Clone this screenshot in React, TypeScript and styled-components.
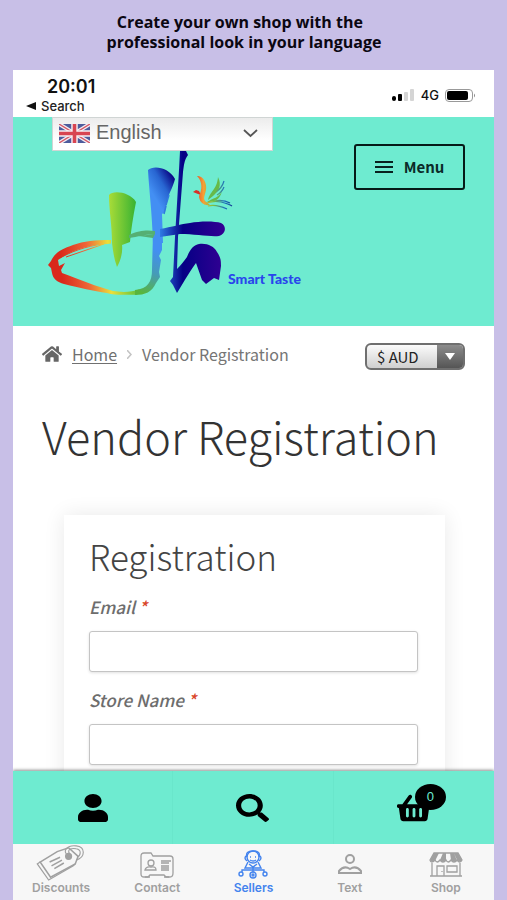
import React from 'react';
import styled, { createGlobalStyle } from 'styled-components';
import { FaHome, FaUser, FaSearch, FaShoppingBasket } from 'react-icons/fa';

const teal = '#6eebd0';
const sans = '"Noto Sans CJK SC", "Noto Sans", sans-serif';
const system = 'Inter, "Liberation Sans", sans-serif';

const GlobalStyle = createGlobalStyle`
  * { box-sizing: border-box; }
  body { margin: 0; background: #c8bfe7; font-family: ${sans}; color: #6d6d6d; }
  h1, h2, p { margin: 0; }
`;

const Page = styled.div`
  height: 100vh;
  display: flex;
  flex-direction: column;
  padding: 0 13px;
`;

const Caption = styled.p`
  padding: 12px 19px 18px 0;
  font: 700 16px/20px "Open Sans", sans-serif;
  text-align: center;
  white-space: pre;
  color: #0b0712;
`;

const Phone = styled.div`
  flex: 1;
  min-height: 0;
  display: flex;
  flex-direction: column;
  background: #fff;
`;

const StatusBar = styled.div`
  display: flex;
  justify-content: space-between;
  align-items: center;
  padding: 6px 18px 3px 13px;
  color: #111;
  font-family: ${system};
`;

const Time = styled.div`
  padding-left: 21px;
  font-size: 18px;
  line-height: 22px;
  font-weight: 600;
`;

const BackLink = styled.a`
  display: flex;
  align-items: center;
  gap: 5px;
  font-size: 13px;
  line-height: 16px;
  font-weight: 500;
  color: #222;
  text-decoration: none;
`;

const Signals = styled.div`
  display: flex;
  align-items: center;
  gap: 6px;
  font-size: 13px;
  font-weight: 500;
`;

const Header = styled.header`
  display: flex;
  justify-content: space-between;
  align-items: flex-start;
  min-height: 209px;
  padding: 0 29px 0 32px;
  background: ${teal};
`;

const Brand = styled.div`
  display: flex;
  flex-direction: column;
`;

const LanguageBox = styled.label`
  display: flex;
  align-items: center;
  width: 221px;
  height: 34px;
  margin-left: 7px;
  padding: 0 14px 2px 6px;
  border: 1px solid #d0d5d4;
  background: linear-gradient(#ececec, #fff 70%);
`;

const LanguageSelect = styled.select`
  flex: 1;
  min-width: 0;
  appearance: none;
  border: 0;
  padding: 0 0 2px 6px;
  background: transparent;
  font: 20px/24px "Liberation Sans", sans-serif;
  color: #666;
`;

const MenuButton = styled.button`
  display: flex;
  align-items: center;
  justify-content: center;
  gap: 11px;
  width: 111px;
  height: 46px;
  margin-top: 27px;
  border: 2px solid #061a18;
  border-radius: 3px;
  background: transparent;
  font: 700 15px/20px ${sans};
  color: #0b2b29;
`;

const Content = styled.main`
  flex: 1;
  min-height: 0;
  overflow: hidden;
  padding: 17px 29px 0;
`;

const TopRow = styled.div`
  display: flex;
  justify-content: space-between;
  align-items: flex-start;
`;

const Breadcrumb = styled.nav`
  display: flex;
  align-items: center;
  gap: 10px;
  font-size: 16px;
  line-height: 22px;
  color: #757575;

  a { color: #707070; text-underline-offset: 2px; }
`;

const CurrencyBox = styled.label`
  display: flex;
  width: 100px;
  height: 27px;
  border: 2px solid #6f6f6f;
  border-radius: 6px;
  overflow: hidden;
  background: linear-gradient(#fbfbfb, #cfcfcf);
`;

const CurrencySelect = styled.select`
  flex: 1;
  min-width: 0;
  appearance: none;
  border: 0;
  padding: 0 0 0 10px;
  background: transparent;
  font: 15px/22px ${sans};
  color: #222;
`;

const CurrencyArrow = styled.span`
  display: flex;
  align-items: center;
  justify-content: center;
  width: 26px;
  background: linear-gradient(#8c8c8c, #555);
`;

const Title = styled.h1`
  margin-top: 34px;
  font: 300 45px/64px ${sans};
  color: #333;
  white-space: nowrap;
`;

const Card = styled.form`
  margin: 47px 20px 0 22px;
  padding: 18px 27px 24px 25px;
  background: #fff;
  box-shadow: 0 0 20px rgba(0, 0, 0, 0.09);
`;

const CardTitle = styled.h2`
  font: 300 35px/46px ${sans};
  color: #444;
`;

const Field = styled.div`
  display: flex;
  flex-direction: column;
  gap: 11px;
  padding-top: 15px;
`;

const FieldLabel = styled.label`
  font-size: 17px;
  line-height: 26px;
  font-weight: 500;
  font-style: italic;
  color: #6d6d6d;
`;

const Required = styled.span`
  color: #d9482b;
`;

const TextInput = styled.input`
  width: 100%;
  height: 41px;
  padding: 0 10px;
  border: 1px solid #c4c4c4;
  border-radius: 3px;
  background: #fff;
  box-shadow: 0 1px 3px rgba(0, 0, 0, 0.12);
`;

const ActionBar = styled.nav`
  display: grid;
  grid-template-columns: repeat(3, 1fr);
  height: 73px;
  background: ${teal};
  box-shadow: 0 -1px 3px rgba(0, 0, 0, 0.45);
  clip-path: inset(-6px 0 0 0);
`;

const Action = styled.button`
  display: flex;
  align-items: center;
  justify-content: center;
  border: 0;
  border-right: 1px solid #69e6cb;
  padding: 0;
  background: transparent;
  color: #000;

  &:last-child { border-right: 0; }
`;

const PersonIcon = styled(FaUser)`
  width: 30px;
  height: 28px;
`;

const SearchIcon = styled(FaSearch)`
  width: 33px;
  height: 28px;
`;

const BasketWrap = styled.span`
  position: relative;
  display: flex;
`;

const Badge = styled.span`
  position: absolute;
  left: 18px;
  top: -7px;
  width: 31px;
  height: 26px;
  border-radius: 50%;
  background: #000;
  font-size: 13px;
  line-height: 26px;
  text-align: center;
  color: ${teal};
`;

const TabBar = styled.nav`
  display: grid;
  grid-template-columns: repeat(5, 1fr);
  height: 56px;
  background: #f7f7f7;
`;

const Tab = styled.a<{ $active?: boolean }>`
  display: flex;
  flex-direction: column;
  align-items: center;
  justify-content: flex-end;
  padding-bottom: 5px;
  font: 600 12px/14px ${system};
  text-decoration: none;
  color: ${(p) => (p.$active ? '#4484ee' : '#a0a0a0')};

  svg { fill: none; stroke: currentColor; }
`;

const Flag = () => (
  <svg width="31" height="19" viewBox="0 0 31 19" aria-hidden="true">
    <rect width="31" height="19" fill="#4d5c9c" />
    <path d="M0 0L31 19M31 0L0 19" stroke="#f3edf3" strokeWidth="4" />
    <path d="M0 0L31 19M31 0L0 19" stroke="#d65765" strokeWidth="1.4" />
    <path d="M15.500 0V19M0 9.500H31" stroke="#f7f0f3" strokeWidth="6.500" />
    <path d="M15.500 0V19M0 9.500H31" stroke="#d84552" strokeWidth="3.600" />
  </svg>
);

const Logo = () => (
  <svg width="265" height="150" viewBox="45 151 265 150" role="img" aria-label="Smart Taste">
    <defs>
      <linearGradient id="leaf" x1="0" x2="1">
        <stop offset="0" stopColor="#a9dc38" /><stop offset="1" stopColor="#38b232" />
      </linearGradient>
      <linearGradient id="stem" gradientUnits="userSpaceOnUse" x1="154" x2="177" y1="196" y2="182">
        <stop offset="0" stopColor="#438ff3" /><stop offset="0.500" stopColor="#2866d2" /><stop offset="1" stopColor="#070382" />
      </linearGradient>
      <linearGradient id="hook" gradientUnits="userSpaceOnUse" x1="48" x2="162" y1="270" y2="262">
        <stop offset="0.120" stopColor="#d9291b" /><stop offset="0.350" stopColor="#ef6638" /><stop offset="0.540" stopColor="#ecdf38" /><stop offset="0.720" stopColor="#7cc93c" /><stop offset="0.860" stopColor="#4fae5c" /><stop offset="1" stopColor="#439bd0" />
      </linearGradient>
      <linearGradient id="ink" gradientUnits="userSpaceOnUse" x1="160" x2="225" y1="0" y2="0">
        <stop offset="0" stopColor="#2f7be4" /><stop offset="0.350" stopColor="#050085" /><stop offset="1" stopColor="#330093" />
      </linearGradient>
      <linearGradient id="tail" gradientUnits="userSpaceOnUse" x1="194" x2="232" y1="0" y2="0">
        <stop offset="0" stopColor="#e5361f" /><stop offset="0.250" stopColor="#f6a035" /><stop offset="0.500" stopColor="#7ec43d" /><stop offset="0.800" stopColor="#1c6fc0" /><stop offset="1" stopColor="#123a94" />
      </linearGradient>
      <linearGradient id="turn" gradientUnits="userSpaceOnUse" x1="158" x2="140" y1="250" y2="292">
        <stop offset="0" stopColor="#438ff3" /><stop offset="0.500" stopColor="#459bb8" /><stop offset="1" stopColor="#58b53e" />
      </linearGradient>
    </defs>
    <path d="M111 240C95 240 84 241 73 245C62 249 55 252 51 261L48 265L51 268L52 273C53 279 57 282 64 284C80 288 93 291 107 293C117 296 128 294 137 295L140 289C130 293 120 292 113 291C98 287 78 279 62 273L61 270L65 263L59 266L58 260C70 251 88 245 111 243Z" fill="url(#hook)" />
    <path d="M60 258C76 249 92 245 111 243M62 255C76 248 90 243 110 241M66 257L104 244" fill="none" stroke="url(#hook)" strokeWidth="1" />
    <path d="M109 195C113 190 130 192 136 202C133 217 131 230 130 242L122 245C123 253 120 262 117 267C114 259 113 251 112 243C112 224 109 211 109 195Z" fill="url(#leaf)" />
    <path d="M153 233H162V250L159 256L161 260L159 272L160 277L156 283C152 292 145 295 135 295V290C148 289 152 281 152 270Z" fill="url(#turn)" />
    <path d="M148 170C153 165 169 167 175 179C173 187 170 191 168 198L165 212L162 214L163 243H153C152 211 149 190 148 170Z" fill="url(#stem)" />
    <path d="M169 195L166 205M166 206L164 214" stroke="#3178dd" strokeWidth="1.500" />
    <path d="M129 235C140 230 147 230 155 231V234C147 234 137 237 129 238ZM139 236L155 234L153 238Z" fill="#55af73" />
    <path d="M160 229C172 227 181 224 190 223C200 221 215 221 221 223C227 226 226 234 219 236C210 237 195 234 180 234L160 237Z" fill="url(#ink)" />
    <path d="M180 151H186L188 155C184 160 184 166 183 172L178 237L177 269C180 266 184 261 187 257C190 249 194 245 199 244C207 243 214 246 217 252C221 258 221 261 221 266L219 280L214 278L206 284L202 280L196 263C192 268 185 280 177 293L173 285L170 281L173 277L175 237L179 170Z" fill="url(#ink)" />
    <path d="M193 192L196 190L199 191L201 195L198 194Z" fill="#d92f25" />
    <path d="M197 176C204 176 207 184 206 190C205 195 203 198 205 201L210 205C203 206 199 201 199 196C202 190 203 182 197 176Z" fill="url(#tail)" />
    <path d="M208 200C210 191 217 190 218 177C222 185 219 191 213 196ZM207 202C213 198 219 198 222 191C220 200 214 202 207 202Z" fill="#67ba48" />
    <path d="M216 192Q222 188 224 181M217 195Q222 192 224 187M204 204Q213 200 221 202T232 206M208 206Q216 204 227 209M214 201Q223 199 230 203" fill="none" stroke="url(#tail)" strokeWidth="1.200" />
    <text x="228" y="284" fontFamily="Lato, sans-serif" fontWeight="900" fontSize="14" fill="#2945ec">Smart Taste</text>
  </svg>
);

const DiscountIcon = () => (
  <svg width="50" height="37" viewBox="0 0 52 39" strokeWidth="1.600">
    <path d="M4 19L22 8L34 4L44 13L41 21L15 35Z" />
    <path d="M4 19L1 21L13 38L39 23L41 21" strokeWidth="1.300" />
    <path d="M14 19L25 14M16 23L27 17M19 26L29 20" />
    <circle cx="34" cy="13" r="3" fill="currentColor" />
    <path d="M34 13C26 7 33 1 42 2C52 3 52 14 42 17M35 10C32 6 37 4 42 5C48 6 47 12 43 14" strokeWidth="1.200" />
  </svg>
);

const ContactIcon = () => (
  <svg width="36" height="30" viewBox="0 0 36 30" strokeWidth="1.300">
    <path d="M2 5Q2 2 5 2H12L14 5H31Q34 5 34 8V22Q34 26 31 26H27L25 24H11L9 26H5Q2 26 2 23Z" />
    <circle cx="12" cy="12" r="3" /><path d="M6 19Q7 15 12 16Q17 15 17 19Z" />
    <path d="M22 10H32M22 12H30M22 15H30M22 17H30M22 19H30M6 26H11M25 26H30" strokeWidth="1.600" />
  </svg>
);

const SellersIcon = () => (
  <svg width="32" height="32" viewBox="0 0 32 32" strokeWidth="1.400">
    <circle cx="16" cy="8" r="6" /><path d="M10 8Q8 2 16 2Q24 2 22 8M10 6Q6 9 10 12M22 6Q26 9 22 12M13 8H14M18 8H19M13 11Q16 13 19 11M11 13L8 19H24L21 13M12 15L16 18L20 15M16 19V23M5 23V21H27V23" />
    <circle cx="16" cy="26" r="3" /><circle cx="16" cy="26" r="1" /><circle cx="4" cy="25" r="2" /><circle cx="28" cy="25" r="2" />
  </svg>
);

const TextIcon = () => (
  <svg width="28" height="28" viewBox="0 0 28 28" strokeWidth="2">
    <ellipse cx="14" cy="6" rx="4" ry="4" /><path d="M3 20V18Q8 12 14 16Q20 12 25 18V20Z" />
  </svg>
);

const ShopIcon = () => (
  <svg width="34" height="30" viewBox="0 0 34 30" strokeWidth="1.300">
    <path d="M5 2H29L33 9Q31 13 28 9Q25 13 22 9Q19 13 17 9Q14 13 11 9Q8 13 6 9Q2 13 1 9Z" />
    <path d="M5 2H10L6 10Q2 12 1 9ZM14 2H17V9Q14 13 11 9ZM21 2H25L28 10Q25 12 22 9ZM29 2L33 9Q32 12 28 9L25 2Z" fill="currentColor" stroke="none" />
    <path d="M3 12V25M31 12V25M1 25H33M8 25V15H15V25M18 15H28V21H18ZM13 20V21" />
  </svg>
);

const tabs = [
  { name: 'Discounts', icon: <DiscountIcon /> },
  { name: 'Contact', icon: <ContactIcon /> },
  { name: 'Sellers', icon: <SellersIcon />, active: true },
  { name: 'Text', icon: <TextIcon /> },
  { name: 'Shop', icon: <ShopIcon /> },
];

export default function App() {
  return (
    <>
      <GlobalStyle />
      <Page>
        <Caption>{'Create your own shop with the  \nprofessional look in your language'}</Caption>
        <Phone>
          <StatusBar>
            <div>
              <Time>20:01</Time>
              <BackLink href="#search">
                <svg width="10" height="8" viewBox="0 0 10 8" aria-hidden="true"><path d="M0 4L10 0V8Z" fill="#111" /></svg>
                Search
              </BackLink>
            </div>
            <Signals>
              <svg width="23" height="12" viewBox="0 0 23 12" aria-hidden="true">
                <rect y="7" width="4" height="5" rx="2" fill="#000" /><rect x="6" y="5" width="4" height="7" rx="1" fill="#000" />
                <rect x="12" y="3" width="4" height="9" rx="1" fill="#d5d5d5" /><rect x="18" width="4" height="12" rx="1" fill="#d5d5d5" />
              </svg>
              4G
              <svg width="31" height="13" viewBox="0 0 31 13" aria-hidden="true">
                <rect x="0.500" y="0.500" width="27" height="12" rx="3.500" fill="#fff" stroke="#999" />
                <rect x="2" y="2" width="21" height="9" rx="2" fill="#000" /><path d="M29 4.500Q31 6.500 29 8.500Z" fill="#888" />
              </svg>
            </Signals>
          </StatusBar>
          <Header>
            <Brand>
              <LanguageBox>
                <Flag />
                <LanguageSelect aria-label="Language"><option>English</option></LanguageSelect>
                <svg width="15" height="9" viewBox="0 0 15 9" aria-hidden="true"><path d="M1 1L7.500 7L14 1" fill="none" stroke="#555" strokeWidth="1.800" /></svg>
              </LanguageBox>
              <Logo />
            </Brand>
            <MenuButton type="button">
              <svg width="18" height="12" viewBox="0 0 18 12" aria-hidden="true"><path d="M0 1H18M0 6H18M0 11H18" stroke="#08211f" strokeWidth="2" /></svg>
              Menu
            </MenuButton>
          </Header>
          <Content>
            <TopRow>
              <Breadcrumb aria-label="Breadcrumb">
                <FaHome size={20} color="#666" />
                <a href="#home">Home</a>
                <svg width="5" height="9" viewBox="0 0 5 9" aria-hidden="true"><path d="M0 0L4 4.500L0 9" fill="none" stroke="#c4c4c4" strokeWidth="1.500" /></svg>
                <span>Vendor Registration</span>
              </Breadcrumb>
              <CurrencyBox>
                <CurrencySelect aria-label="Currency"><option>$ AUD</option></CurrencySelect>
                <CurrencyArrow>
                  <svg width="10" height="7" viewBox="0 0 10 7" aria-hidden="true"><path d="M0 0H10L5 7Z" fill="#fff" /></svg>
                </CurrencyArrow>
              </CurrencyBox>
            </TopRow>
            <Title>Vendor Registration</Title>
            <Card>
              <CardTitle>Registration</CardTitle>
              <Field>
                <FieldLabel htmlFor="email">Email <Required>*</Required></FieldLabel>
                <TextInput id="email" type="email" />
              </Field>
              <Field>
                <FieldLabel htmlFor="store">Store Name <Required>*</Required></FieldLabel>
                <TextInput id="store" type="text" />
              </Field>
            </Card>
          </Content>
          <ActionBar aria-label="Account">
            <Action type="button" aria-label="My account"><PersonIcon preserveAspectRatio="none" /></Action>
            <Action type="button" aria-label="Search"><SearchIcon preserveAspectRatio="none" /></Action>
            <Action type="button" aria-label="Basket">
              <BasketWrap><FaShoppingBasket size={34} /><Badge>0</Badge></BasketWrap>
            </Action>
          </ActionBar>
          <TabBar aria-label="Main">
            {tabs.map((t) => (
              <Tab key={t.name} href={`#${t.name.toLowerCase()}`} $active={t.active}>{t.icon}{t.name}</Tab>
            ))}
          </TabBar>
        </Phone>
      </Page>
    </>
  );
}
